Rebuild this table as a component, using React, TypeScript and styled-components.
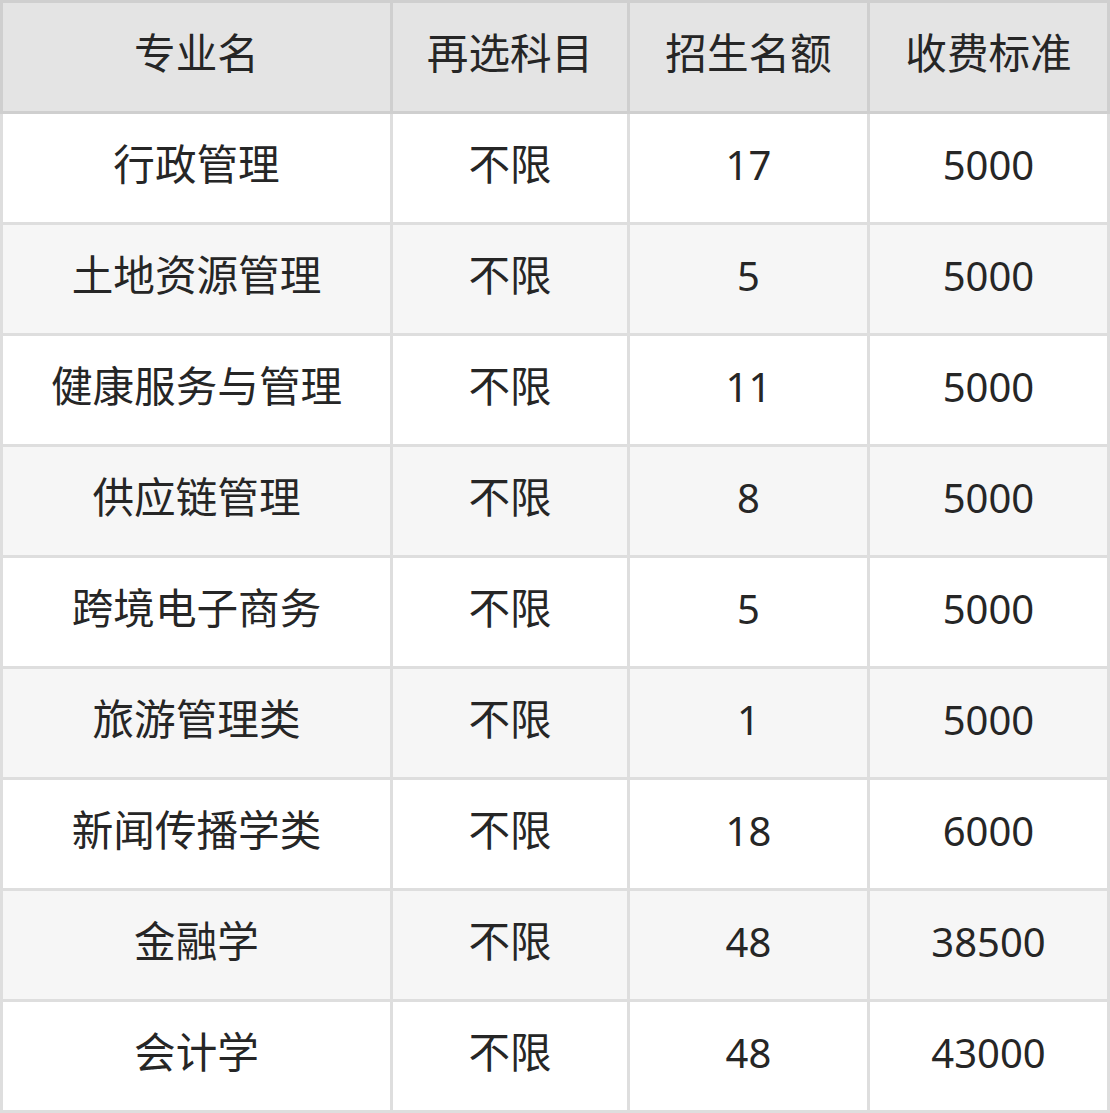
import React from "react";
import styled, { createGlobalStyle } from "styled-components";

const Global = createGlobalStyle`
  html, body { margin: 0; padding: 0; background: #fff; }
  body { font-family: "Noto Sans", "Noto Sans CJK SC", sans-serif; }
`;

const Table = styled.table`
  border-collapse: collapse;
  width: 1110px;
  table-layout: fixed;
  color: #262626;
  font-size: 40px;
`;

const Th = styled.th<{ $w: number }>`
  width: ${(p) => p.$w}px;
  height: 100px;
  padding: 0 0 8px 0;
  background: #e4e4e4;
  border: 3px solid #cfcfcf;
  font-weight: 400;
  text-align: center;
  vertical-align: middle;
`;

const Tr = styled.tr<{ $alt: boolean }>`
  background: ${(p) => (p.$alt ? "#f6f6f6" : "#ffffff")};
`;

const Td = styled.td`
  height: 100px;
  padding: 0 0 8px 0;
  border: 3px solid #dedede;
  text-align: center;
  vertical-align: middle;
  white-space: nowrap;
`;

const Text = styled.span<{ $cjk: boolean }>`
  font-size: ${(p) => (p.$cjk ? "41.6px" : "40px")};
  line-height: 1.2;
`;

const headers: [string, number][] = [
  ["专业名", 387],
  ["再选科目", 234],
  ["招生名额", 237],
  ["收费标准", 237],
];

const rows: string[][] = [
  ["行政管理", "不限", "17", "5000"],
  ["土地资源管理", "不限", "5", "5000"],
  ["健康服务与管理", "不限", "11", "5000"],
  ["供应链管理", "不限", "8", "5000"],
  ["跨境电子商务", "不限", "5", "5000"],
  ["旅游管理类", "不限", "1", "5000"],
  ["新闻传播学类", "不限", "18", "6000"],
  ["金融学", "不限", "48", "38500"],
  ["会计学", "不限", "48", "43000"],
];

const isCjk = (s: string) => /[\u4e00-\u9fff]/.test(s);

export default function App() {
  return (
    <>
      <Global />
      <Table>
        <thead>
          <tr>
            {headers.map(([h, w]) => (
              <Th key={h} $w={w}>
                <Text $cjk>{h}</Text>
              </Th>
            ))}
          </tr>
        </thead>
        <tbody>
          {rows.map((r, i) => (
            <Tr key={i} $alt={i % 2 === 1}>
              {r.map((c, j) => (
                <Td key={j}>
                  <Text $cjk={isCjk(c)}>{c}</Text>
                </Td>
              ))}
            </Tr>
          ))}
        </tbody>
      </Table>
    </>
  );
}
